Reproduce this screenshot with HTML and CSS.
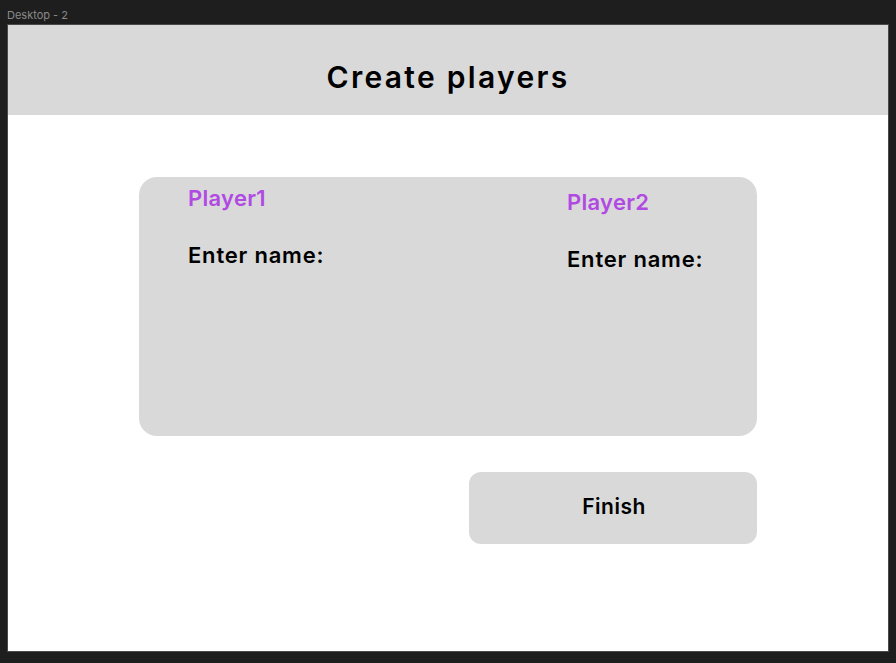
FILE: index.html
```html
<!DOCTYPE html>
<html>
<head>
<meta charset="utf-8">
<link rel="stylesheet" href="styles.css">
</head>
<body>
<div class="canvas">
  <div class="frame-label">Desktop - 2</div>
  <div class="frame">
    <header class="header">
      <h1 class="title">Create players</h1>
    </header>
    <section class="card">
      <div class="player p1">
        <div class="player-name">Player1</div>
        <div class="enter">Enter name:</div>
      </div>
      <div class="player p2">
        <div class="player-name">Player2</div>
        <div class="enter">Enter name:</div>
      </div>
    </section>
    <button class="finish">Finish</button>
  </div>
</div>
</body>
</html>
```
FILE: styles.css
```css
* { box-sizing: border-box; }
html, body {
  margin: 0;
  padding: 0;
  background: #1e1e1e;
  font-family: Inter, "Noto Sans", sans-serif;
}
.canvas {
  width: 896px;
  height: 663px;
  padding-left: 7px;
}
.frame-label {
  height: 24px;
  padding-top: 9px;
  font-size: 11px;
  line-height: 13px;
  color: #8a8a8a;
}
.frame {
  width: 882px;
  height: 628px;
  border: 1px solid #4a4a4a;
  background: #ffffff;
  display: flex;
  flex-direction: column;
}
.header {
  height: 90px;
  background: #d9d9d9;
  padding-top: 34px;
}
.title {
  margin: 0;
  text-align: center;
  font-size: 30px;
  line-height: 36px;
  font-weight: 600;
  letter-spacing: 2.3px;
  color: #000;
}
.card {
  margin-top: 62px;
  margin-left: 131px;
  width: 618px;
  height: 259px;
  background: #d9d9d9;
  border-radius: 18px;
  display: grid;
  grid-template-columns: 379px 1fr;
  padding: 8px 0 0 49px;
}
.player-name {
  font-size: 22px;
  line-height: 26px;
  font-weight: 600;
  letter-spacing: 0.3px;
  color: #b14ae3;
}
.enter {
  font-size: 22px;
  line-height: 26px;
  font-weight: 600;
  letter-spacing: 0.8px;
  color: #000;
  margin-top: 31px;
}
.p2 { padding-top: 4px; }
.p2 .enter { margin-top: 31px; }
.finish {
  margin-top: 36px;
  margin-left: 461px;
  width: 288px;
  height: 72px;
  border: 0;
  border-radius: 12px;
  background: #d9d9d9;
  font-family: Inter, "Noto Sans", sans-serif;
  font-size: 21px;
  font-weight: 600;
  letter-spacing: 0.5px;
  line-height: 26px;
  color: #000;
  padding: 0 0 3px 2px;
  display: flex;
  align-items: center;
  justify-content: center;
}
```
